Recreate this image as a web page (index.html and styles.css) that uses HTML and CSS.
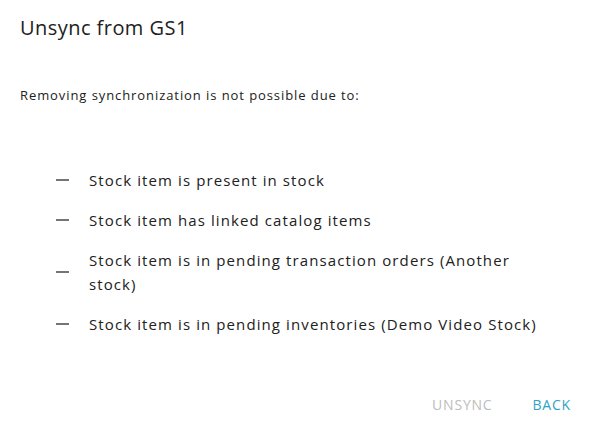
FILE: index.html
```html
<!DOCTYPE html>
<html>
<head>
<meta charset="utf-8">
<link rel="stylesheet" href="styles.css">
</head>
<body>
<div class="dialog">
  <h1 class="title">Unsync from GS1</h1>
  <p class="subtitle">Removing synchronization is not possible due to:</p>
  <ul class="reasons">
    <li class="reason"><span class="dash"></span><span class="reason-text">Stock item is present in stock</span></li>
    <li class="reason"><span class="dash"></span><span class="reason-text">Stock item has linked catalog items</span></li>
    <li class="reason"><span class="dash"></span><span class="reason-text">Stock item is in pending transaction orders (Another stock)</span></li>
    <li class="reason"><span class="dash"></span><span class="reason-text">Stock item is in pending inventories (Demo Video Stock)</span></li>
  </ul>
  <div class="actions">
    <button class="btn btn-disabled">UNSYNC</button>
    <button class="btn btn-primary">BACK</button>
  </div>
</div>
</body>
</html>
```

FILE: styles.css
```css
html, body {
  margin: 0;
  padding: 0;
  background: #ffffff;
}
body {
  font-family: "Open Sans", "Noto Sans", sans-serif;
  color: #212121;
  width: 590px;
  height: 429px;
  overflow: hidden;
}
.dialog {
  padding: 12px 0 0 20px;
  box-sizing: border-box;
  width: 590px;
  height: 429px;
  display: flex;
  flex-direction: column;
}
.title {
  margin: 0;
  font-size: 20px;
  font-weight: 400;
  line-height: 32px;
  letter-spacing: 0.45px;
}
.subtitle {
  margin: 0;
  margin-top: 41px;
  font-size: 13px;
  line-height: 20px;
  letter-spacing: 0.92px;
}
.reasons {
  list-style: none;
  margin: 55px 0 0 0;
  padding: 0 0 0 36px;
  width: 492px;
}
.reason {
  display: flex;
  align-items: center;
  padding: 8px 0;
  font-size: 15px;
  line-height: 24px;
  letter-spacing: 1.1px;
}
.dash {
  flex: none;
  width: 13px;
  height: 2px;
  background: #757575;
  margin-right: 20px;
}
.reason-text {
  flex: 1;
}
.actions {
  margin-top: auto;
  display: flex;
  justify-content: flex-end;
  gap: 40px;
  padding: 0 19px 14px 0;
}
.btn {
  background: none;
  border: none;
  padding: 0;
  font-family: inherit;
  font-size: 14px;
  font-weight: 500;
  line-height: 20px;
  letter-spacing: 0.8px;
}
.btn-disabled {
  color: #bdbdbd;
}
.btn-primary {
  color: #2fa3c4;
}
```
